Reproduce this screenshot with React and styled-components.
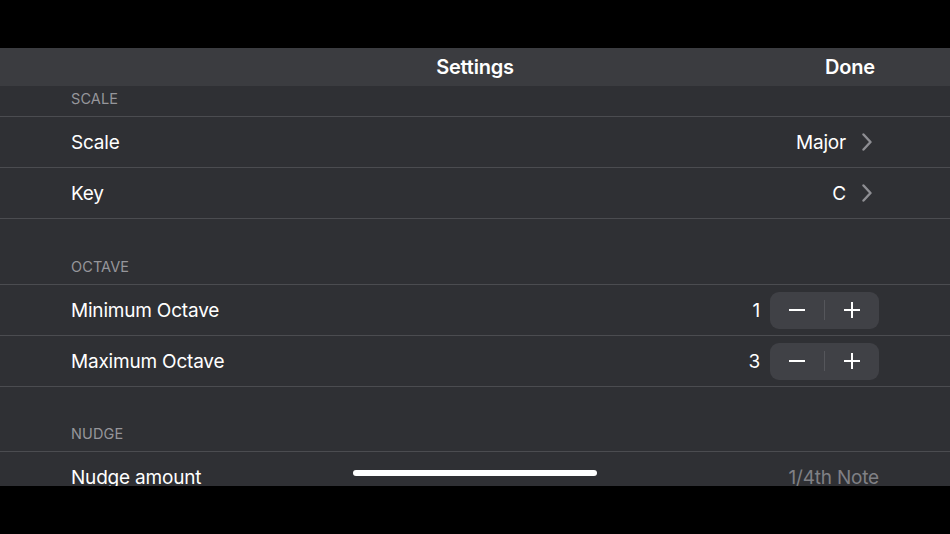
import React from 'react';
import styled, { createGlobalStyle } from 'styled-components';

const GlobalStyle = createGlobalStyle`
  html, body {
    margin: 0;
    padding: 0;
    background: #000;
  }
  body {
    font-family: Inter, "Noto Sans", "Liberation Sans", sans-serif;
    -webkit-font-smoothing: antialiased;
  }
`;

const Screen = styled.div`
  width: 950px;
  height: 534px;
  background: #000;
  display: flex;
  flex-direction: column;
  padding: 48px 0;
  box-sizing: border-box;
`;

const Sheet = styled.div`
  position: relative;
  flex: 1;
  background: #2f3034;
  overflow: hidden;
  display: flex;
  flex-direction: column;
  & > * {
    flex-shrink: 0;
  }
`;

const NavBar = styled.header`
  height: 38px;
  background: #3b3c40;
  display: flex;
  align-items: center;
  justify-content: center;
  position: relative;
`;

const NavTitle = styled.h1`
  margin: 0;
  color: #fff;
  font-size: 20px;
  font-weight: 600;
  letter-spacing: -0.2px;
`;

const DoneButton = styled.button`
  position: absolute;
  right: 75px;
  top: 0;
  height: 100%;
  border: none;
  background: none;
  padding: 0;
  color: #fff;
  font: inherit;
  font-size: 20px;
  font-weight: 600;
  letter-spacing: -0.2px;
`;

const SectionHeader = styled.div`
  height: ${(p) => p.$height}px;
  box-sizing: border-box;
  display: flex;
  align-items: flex-end;
  padding: 0 71px 9px;
  color: #96969b;
  font-size: 14.5px;
  line-height: 16px;
  letter-spacing: 0.1px;
  text-transform: uppercase;
`;

const Group = styled.div`
  border-top: 1px solid #4b4c50;
  border-bottom: 1px solid #4b4c50;
`;

const Row = styled.div`
  height: 50px;
  display: flex;
  align-items: center;
  padding-left: 71px;
  & + & {
    border-top: 1px solid #4b4c50;
  }
`;

const RowInner = styled.div`
  flex: 1;
  height: 100%;
  display: flex;
  align-items: center;
  justify-content: space-between;
  padding-right: 71px;
`;

const Label = styled.span`
  color: #fff;
  font-size: 19px;
  letter-spacing: -0.2px;
`;

const Trailing = styled.div`
  display: flex;
  align-items: center;
  gap: ${(p) => p.$gap || 10}px;
`;

const Value = styled.span`
  color: ${(p) => (p.$muted ? '#808085' : '#fff')};
  font-size: 19px;
  letter-spacing: -0.2px;
`;

const ChevronWrap = styled.span`
  display: flex;
  margin-right: 6px;
`;

const Stepper = styled.div`
  width: 109px;
  height: 37px;
  border-radius: 9px;
  background: #404146;
  display: flex;
  align-items: center;
`;

const StepButton = styled.button`
  flex: 1;
  height: 100%;
  border: none;
  background: none;
  padding: 0;
  display: flex;
  align-items: center;
  justify-content: center;
`;

const StepDivider = styled.span`
  width: 1px;
  height: 20px;
  background: #55565b;
`;

const HomeIndicator = styled.div`
  position: absolute;
  left: 353px;
  bottom: 10px;
  width: 244px;
  height: 6px;
  border-radius: 3px;
  background: #fff;
`;

const Chevron = () => (
  <svg width="12" height="18" viewBox="0 0 12 18" fill="none">
    <polyline
      points="2.5,1.5 9.5,9 2.5,16.5"
      stroke="#8e8e93"
      strokeWidth="2.4"
      strokeLinecap="round"
      strokeLinejoin="round"
    />
  </svg>
);

const Minus = () => (
  <svg width="18" height="18" viewBox="0 0 18 18">
    <line x1="1" y1="9" x2="17" y2="9" stroke="#fff" strokeWidth="2" />
  </svg>
);

const Plus = () => (
  <svg width="18" height="18" viewBox="0 0 18 18">
    <line x1="1" y1="9" x2="17" y2="9" stroke="#fff" strokeWidth="2" />
    <line x1="9" y1="1" x2="9" y2="17" stroke="#fff" strokeWidth="2" />
  </svg>
);

function DisclosureRow({ label, value }) {
  return (
    <Row>
      <RowInner>
        <Label>{label}</Label>
        <Trailing $gap={15}>
          <Value>{value}</Value>
          <ChevronWrap>
            <Chevron />
          </ChevronWrap>
        </Trailing>
      </RowInner>
    </Row>
  );
}

function StepperRow({ label, value }) {
  return (
    <Row>
      <RowInner>
        <Label>{label}</Label>
        <Trailing $gap={10}>
          <Value>{value}</Value>
          <Stepper>
            <StepButton aria-label="decrease">
              <Minus />
            </StepButton>
            <StepDivider />
            <StepButton aria-label="increase">
              <Plus />
            </StepButton>
          </Stepper>
        </Trailing>
      </RowInner>
    </Row>
  );
}

export default function App() {
  return (
    <>
      <GlobalStyle />
      <Screen>
        <Sheet>
          <NavBar>
            <NavTitle>Settings</NavTitle>
            <DoneButton>Done</DoneButton>
          </NavBar>

          <SectionHeader $height={30}>Scale</SectionHeader>
          <Group>
            <DisclosureRow label="Scale" value="Major" />
            <DisclosureRow label="Key" value="C" />
          </Group>

          <SectionHeader $height={65}>Octave</SectionHeader>
          <Group>
            <StepperRow label="Minimum Octave" value="1" />
            <StepperRow label="Maximum Octave" value="3" />
          </Group>

          <SectionHeader $height={64}>Nudge</SectionHeader>
          <Group>
            <Row>
              <RowInner>
                <Label>Nudge amount</Label>
                <Value $muted>1/4th Note</Value>
              </RowInner>
            </Row>
          </Group>

          <HomeIndicator />
        </Sheet>
      </Screen>
    </>
  );
}
